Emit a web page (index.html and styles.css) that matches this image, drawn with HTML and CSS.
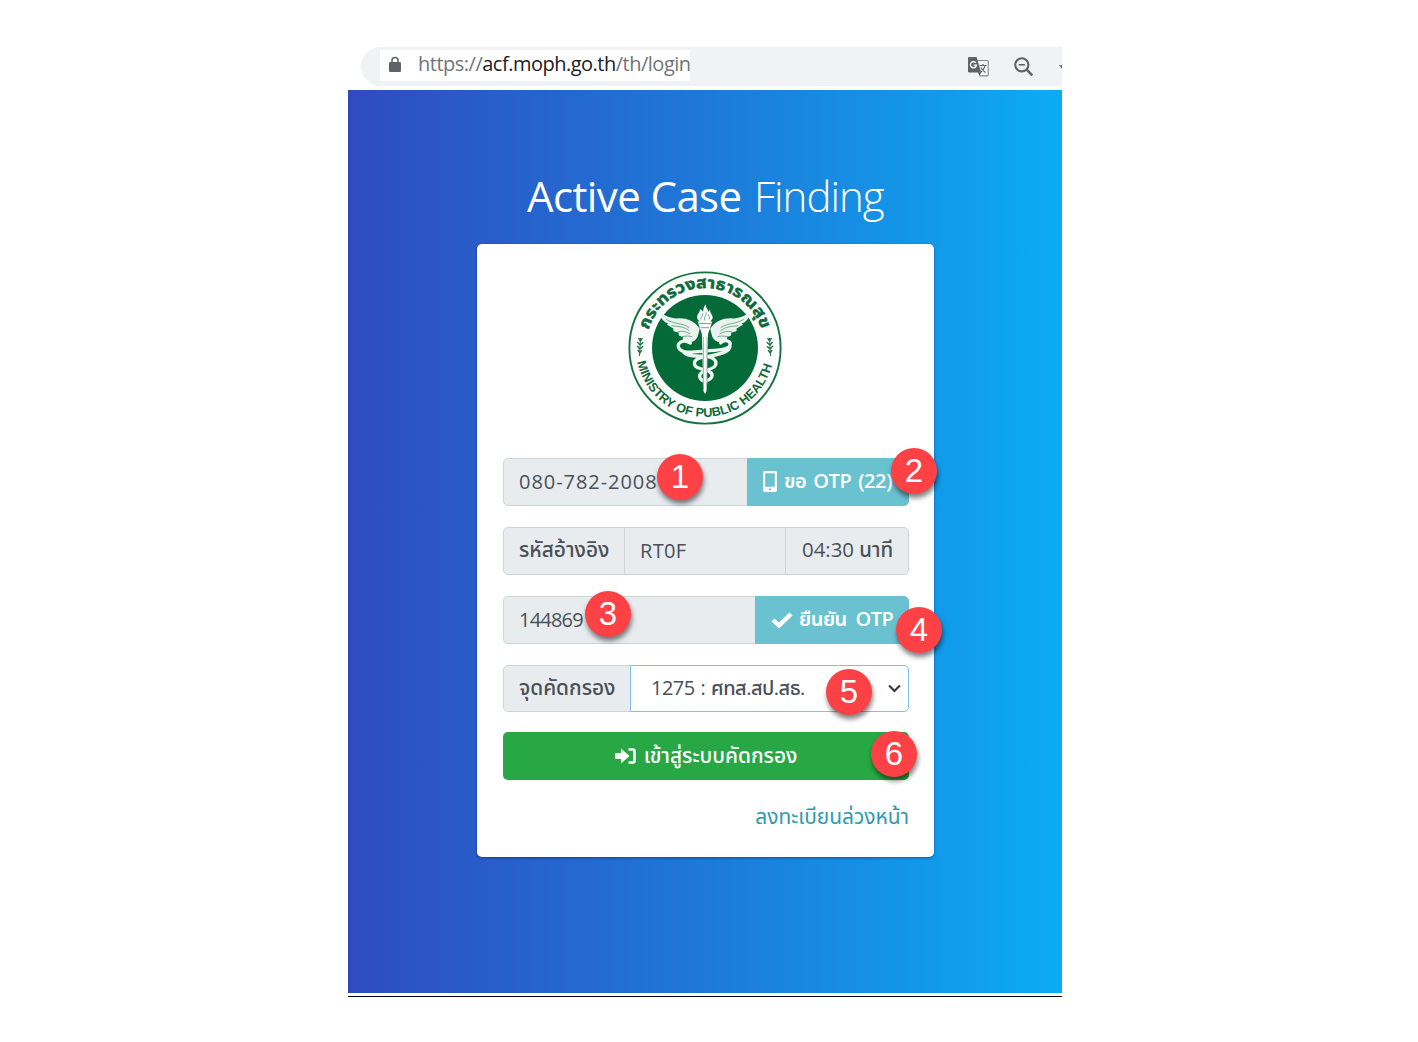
FILE: index.html
```html
<!DOCTYPE html>
<html lang="th">
<head>
<meta charset="utf-8">
<title>Active Case Finding</title>
<link rel="stylesheet" href="styles.css">
</head>
<body>
<main class="shot">
  <header class="bar">
    <div class="address">
      <svg class="lock" viewBox="0 0 12 16"><path d="M3 7V4.500a3 3 0 0 1 6 0V7" fill="none" stroke="#5f6368" stroke-width="1.600"/><rect y="6" width="12" height="10" rx="1.300" fill="#5f6368"/></svg>
      <span class="url"><span class="t">https://<b>acf.moph.go.th</b>/th/login</span></span>
    </div>
    <div class="tools">
      <svg class="translate" viewBox="0 0 21 20"><path d="M8 3.500h11a1.200 1.200 0 0 1 1.200 1.200v13a1.200 1.200 0 0 1-1.200 1.200h-7.500" fill="#f5f6f7" stroke="#85888c" stroke-width="1.100"/><path d="M1.200 0h7.300l4.700 15.500H1.200A1.200 1.200 0 0 1 0 14.300V1.200A1.200 1.200 0 0 1 1.200 0zM10 15.500h3.200L11.500 19z" fill="#5f6368"/><path d="M7.800 5.900a3 3 0 1 0 .6 2.200H5.700" fill="none" stroke="#fff" stroke-width="1.400"/><path d="M11.500 8.500h7M15 7v1.500M17 8.500c-.5 3-2 5-4 6.500M13 10.500c1 2 2.500 3.500 4.500 5" fill="none" stroke="#5f6368" stroke-width="1.200"/></svg>
      <svg class="zoomout" viewBox="0 0 20 20"><circle cx="7.800" cy="7.800" r="6.600" fill="none" stroke="#5f6368" stroke-width="2.100"/><path d="M4.700 7.800h6.200" stroke="#5f6368" stroke-width="1.600"/><path d="M12.700 12.700l5.600 5.600" stroke="#5f6368" stroke-width="2.500"/></svg>
      <svg class="star" viewBox="0 0 3 6"><path d="M0 1.200h3v3.600z" fill="#5f6368"/></svg>
    </div>
  </header>
  <section class="hero">
    <h1 class="title"><span class="active">Active Case</span> <span class="finding">Finding</span></h1>
    <form class="card">
      <svg class="emblem" viewBox="0 0 154 154">
        <defs>
          <path id="upper" d="M20.500 59A59 59 0 0 1 133.500 59"/>
          <path id="lower" d="M9.300 91A69.200 69.200 0 0 0 144.700 91"/>
          <g id="wing">
            <path d="M72 58C67 50 58 47 50 48 44 48 38 45 34 42c0 6 4 10 8 11-2 1-1 2 0 2l5 3c-1 2 0 3 2 3l3 1c-1 3 2 4 4 4-1 3 1 5 4 5 5 1 8-1 10-5z" fill="#e9f2ec"/>
            <path d="M40 49c8 5 15 3 22 8M45 55c7 1 12 1 17 5M51 61c5-1 8 0 12 2M55 66c4-1 7-1 10 0" fill="none" stroke="#5c9d7b" stroke-width=".8"/>
          </g>
          <g id="leaf"><path d="M12 67v18" stroke="#17713f" stroke-width="1"/><path d="M12 70l-2-3M12 70l2-3M12 74l-3-3M12 74l3-3M12 78l-3-3M12 78l3-3M12 82l-2-3M12 82l2-3" stroke="#17713f" stroke-width="1.400"/></g>
        </defs>
        <circle cx="77" cy="77" r="75.600" fill="#fff" stroke="#12733f" stroke-width="1.900"/>
        <circle cx="77" cy="77" r="53" fill="#046b38"/>
        <text class="ring-th"><textPath href="#upper" textLength="150" lengthAdjust="spacingAndGlyphs">กระทรวงสาธารณสุข</textPath></text>
        <text class="ring-en"><textPath href="#lower" textLength="185" lengthAdjust="spacingAndGlyphs">MINISTRY OF PUBLIC HEALTH</textPath></text>
        <use href="#leaf" transform="rotate(3 12 76)"/>
        <use href="#leaf" transform="translate(154 0) scale(-1 1) rotate(3 12 76)"/>
        <g transform="translate(-3.500 -1.500) scale(1.045 1.020)">
          <use href="#wing"/>
          <use href="#wing" transform="translate(154 0) scale(-1 1)"/>
          <path d="M74 60h6L78.500 119l-1.500 3-1.500-3z" fill="#fff"/>
          <path d="M70 51h14l-2 6-2 6h-6l-2-6zM72 51c-6-6 1-8 0-12 3 1 3 2 3 3 1-3 0-5 3-8-1 4 3 5 2 8l2-3c-1 5 6 7 0 12z" fill="#f7faf8"/>
          <path d="M73 49c0-3 2-3 2-6M77 50c-2-4 2-4 1-8M81 49c1-3-1-3-1-5M71 53h12M73 57h8" fill="none" stroke="#5c9d7b" stroke-width=".8"/>
          <path d="M63 72c-8-4-13 0-11 5 3 6 15 4 25 3 12-1 23-1 24-6 1-4-5-6-9-2M101 75c0 6-10 8-20 10-9 1-15 3-14 8 1 5 9 4 14 7 5 3 3 8-4 9M56 80c2 5 12 5 20 5 9 1 13 4 11 9-2 4-9 4-13 7-4 3-2 8 4 9" fill="none" stroke="#edf5f0" stroke-width="3.200" stroke-linecap="round"/>
          <path d="M75.500 66v52M79 66v48" stroke="#4f966f" stroke-width=".6"/>
        </g>
      </svg>
      <div class="group">
        <div class="cell grow"><span class="t phone">080-782-2008</span></div>
        <div class="cell teal w-otp"><svg class="mobile" viewBox="0 0 14 21"><path fill-rule="evenodd" d="M2 0h10a2 2 0 0 1 2 2v17a2 2 0 0 1-2 2H2a2 2 0 0 1-2-2V2a2 2 0 0 1 2-2zM2.200 2.200v13.500h9.600V2.200zM7 17.200a1.100 1.100 0 1 0 0 2.200 1.100 1.100 0 0 0 0-2.200z" fill="#fff"/></svg><span class="t request">ขอ OTP (22)</span></div>
        <i class="badge b1">1</i><i class="badge b2">2</i>
      </div>
      <div class="group">
        <div class="cell w-ref"><span class="t ref">รหัสอ้างอิง</span></div>
        <div class="cell grow"><span class="t code">RT0F</span></div>
        <div class="cell w-time"><span class="t time">04:30 นาที</span></div>
      </div>
      <div class="group">
        <div class="cell grow"><span class="t pin">144869</span></div>
        <div class="cell teal w-ok"><svg class="check" viewBox="0 0 22 16"><path d="M2 8l6 5.500L20 2" fill="none" stroke="#fff" stroke-width="4.400"/></svg><span class="t confirm">ยืนยัน OTP</span></div>
        <i class="badge b3">3</i><i class="badge b4">4</i>
      </div>
      <div class="group point-row">
        <div class="cell w-point"><span class="t point">จุดคัดกรอง</span></div>
        <div class="cell grow select"><span class="t option">1275 : ศทส.สป.สธ.</span><svg class="chevron" viewBox="0 0 12 8"><path d="M1 1.300l5 5 5-5" fill="none" stroke="#343a40" stroke-width="2"/></svg></div>
        <i class="badge b5">5</i>
      </div>
      <div class="group submit">
        <svg class="enter" viewBox="0 0 21 16"><path d="M0 5h6V.5l8.500 7.500L6 15.500V11H0z" fill="#fff"/><path d="M13.500 1.500H18A1.500 1.500 0 0 1 19.500 3v10a1.500 1.500 0 0 1-1.500 1.500h-4.500" fill="none" stroke="#fff" stroke-width="2.600"/></svg><span class="t enter-text">เข้าสู่ระบบคัดกรอง</span>
        <i class="badge b6">6</i>
      </div>
      <a class="register"><span class="t">ลงทะเบียนล่วงหน้า</span></a>
    </form>
  </section>
  <div class="rule"></div>
</main>
</body>
</html>
```
FILE: styles.css
```css
* { box-sizing: border-box; }
body { margin: 0; background: #fff; font-family: "Open Sans", "Noto Sans Thai", "Noto Sans", sans-serif; }
.shot { width: 714px; margin: 47px 0 0 348px; }
.t { white-space: nowrap; }

.bar { height: 39px; margin-left: 13px; padding-left: 19px; background: #f1f2f4; border-radius: 20px 0 0 20px; display: flex; justify-content: space-between; }
.address { width: 310px; height: 31px; margin-top: 3px; background: #fff; display: flex; align-items: center; padding: 0 0 3px 9px; }
.lock { width: 12px; height: 16px; margin-right: 17px; flex: none; }
.url { font: 20px/28px "Open Sans", sans-serif; color: #717479; letter-spacing: -.5px; }
.url b { font-weight: 400; color: #202124; }
.tools { display: flex; align-items: center; }
.translate { width: 21px; height: 20px; margin-right: 25px; }
.zoomout { width: 20px; height: 20px; margin-right: 25px; }
.star { width: 3px; height: 6px; }

.hero { height: 903px; margin-top: 4px; padding-top: 74px; background: linear-gradient(90deg, #2f4bc0, #1e79d8 50%, #0bacf4); }
.title { margin: 0; height: 64px; line-height: 64px; font-size: 42px; color: #fff; white-space: nowrap; display: flex; padding-left: 179px; }
.active { font-weight: 400; width: 227px; letter-spacing: -.6px; }
.finding { font-weight: 300; letter-spacing: -1px; }
.card { width: 457px; height: 613px; margin: 16px 0 0 129px; padding: 27px 25px 0 26px; background: #fff; border-radius: 5px; box-shadow: 0 1px 3px rgba(0, 0, 50, .4); display: flex; flex-direction: column; }
.emblem { width: 154px; height: 154px; margin: 0 0 33px 125px; flex: none; }
.ring-th { font: 700 16px "Noto Sans Thai", "Noto Sans", sans-serif; fill: #10693a; stroke: #10693a; stroke-width: .5px; }
.ring-en { font: 700 12.5px "Liberation Sans", sans-serif; fill: #10693a; }

.group { position: relative; display: flex; height: 48px; margin-bottom: 21px; flex: none; font-size: 20px; font-weight: 500; color: #495057; }
.cell { display: flex; align-items: center; padding: 0 0 1px 15px; border: 1px solid #ced4da; background: #e9ecef; min-width: 0; }
.cell:first-child { border-radius: 5px 0 0 5px; }
.cell + .cell { margin-left: -1px; }
.cell:nth-child(2):not(.grow), .cell:nth-child(3), .select { border-radius: 0 5px 5px 0; }
.grow { flex: 1; }
.cell.teal { background: #6ac2d0; border-color: #6ac2d0; color: #fff; font-weight: 600; }
.w-otp { width: 162px; }
.w-ref { width: 122px; }
.w-time { width: 124px; padding-left: 16px; }
.w-ok { width: 154px; }
.w-point { width: 128px; }
.cell.select { background: #fff; border-color: #80bdff; padding: 0 7px 0 20px; justify-content: space-between; }
.phone { letter-spacing: .95px; }
.pin { letter-spacing: -.8px; }
.code { letter-spacing: .3px; }
.ref, .point, .enter-text { font-size: 20.8px; }
.time { font-size: 20.4px; }
.option { letter-spacing: -.5px; word-spacing: 1px; }
.request { letter-spacing: -.4px; word-spacing: 2px; }
.confirm { letter-spacing: -.5px; word-spacing: 4px; }
.point-row { height: 47px; }
.chevron { width: 13px; height: 9px; }
.mobile { width: 14px; height: 21px; margin-right: 7px; }
.check { width: 22px; height: 16px; margin-right: 6px; }
.submit { background: #28a745; border-radius: 5px; color: #fff; align-items: center; justify-content: center; margin-top: -1px; margin-bottom: 20px; }
.enter { width: 21px; height: 16px; margin-right: 8px; }
.register { align-self: flex-end; font-size: 20.9px; line-height: 32px; color: #2e9ab3; }

.badge { position: absolute; width: 46px; height: 46px; border-radius: 50%; background: #fe4144; color: #fff; font: 33px/46px "Liberation Sans", sans-serif; text-align: center; box-shadow: 1px 4px 5px rgba(0, 0, 0, .5); z-index: 2; }
.b1 { left: 154px; top: -4px; }
.b2 { left: 388px; top: -10px; }
.b3 { left: 82px; top: -5px; }
.b4 { left: 393px; top: 11px; }
.b5 { left: 323px; top: 4px; }
.b6 { left: 368px; top: -1px; }
.rule { height: 1px; margin-top: 3px; background: #000; }
```
